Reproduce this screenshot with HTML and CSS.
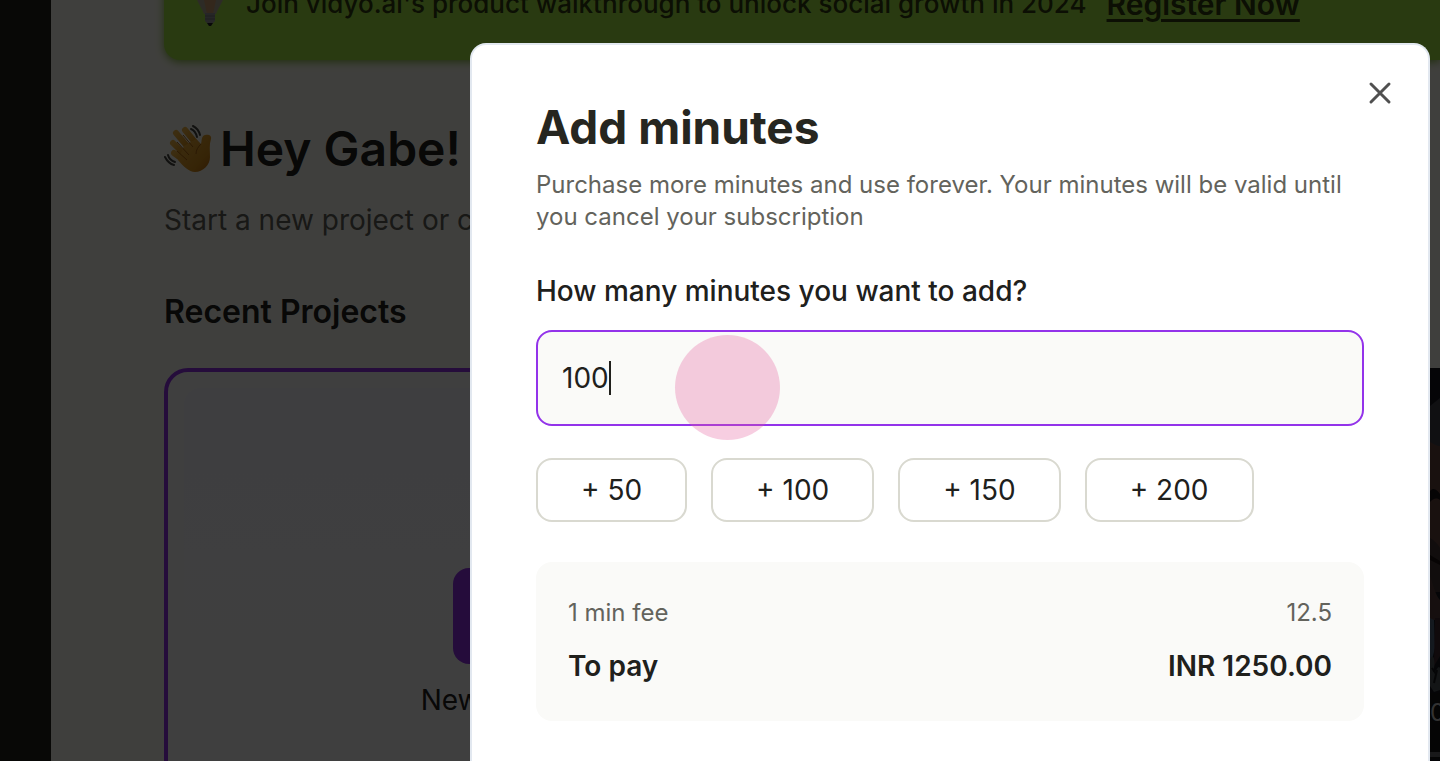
FILE: index.html
```
<!DOCTYPE html>
<html lang="en">
<head>
    <meta charset="UTF-8">
    <meta name="viewport" content="width=device-width, initial-scale=1.0">
    <title>Add minutes</title>
    <link rel="stylesheet" href="styles.css">
</head>
<body>
    <div class="page">
        <aside class="sidebar"></aside>
        <main class="content">
            <div class="banner">
                <svg class="bulb" viewBox="0 0 32 48" aria-hidden="true">
                    <path d="M16 2C7 2 2 8 2 15c0 6 5 11 8 19h12c3-8 8-13 8-19C30 8 25 2 16 2z" fill="#b5ad96"/>
                    <path d="M13 34l-3-14h12l-3 14z" fill="#c99c70"/>
                    <path d="M11 33h10v8l-3 3h-4l-3-3z" fill="#98989c"/>
                    <path d="M11 36h10M11 39h10" stroke="#77777c" stroke-width="1"/>
                    <path d="M13 43h6l-2 3h-2z" fill="#222"/>
                </svg>
                <span>Join vidyo.ai's product walkthrough to unlock social growth in 2024</span>
                <a href="#">Register Now</a>
            </div>
            <h1>
                <svg class="wave" viewBox="0 0 48 48" role="img" aria-label="Waving hand">
                    <defs>
                        <linearGradient id="skin" x1="0" y1="0" x2="1" y2="1">
                            <stop offset="0" stop-color="#f0b444"/>
                            <stop offset="0.7" stop-color="#d6901c"/>
                            <stop offset="1" stop-color="#b8640c"/>
                        </linearGradient>
                    </defs>
                    <g fill="none" stroke="url(#skin)" stroke-width="6" stroke-linecap="round">
                        <path d="M21 5L34 21"/>
                        <path d="M12 8L28 27"/>
                        <path d="M9 18L24 33"/>
                        <path d="M10 28L25 39"/>
                    </g>
                    <path d="M20 21L32 14l5 5c1-3 0-8 4-9 3-1 7 0 6 4-2 6-1 12-1 18 0 8-7 15-15 15-6 0-12-6-17-12z" fill="url(#skin)"/>
                    <path d="M19 10l10 12M13 17l12 13M13 26l10 9M37 19c-3 3-5 6-5 10" fill="none" stroke="#a86310" stroke-width="1"/>
                    <g fill="none" stroke="#454540" stroke-width="2" stroke-linecap="round">
                        <path d="M27 4c3 1 5 4 6 8"/>
                        <path d="M29 1c4 2 6 5 7 9"/>
                        <path d="M4 30c1 4 4 6 7 7"/>
                        <path d="M1 32c2 4 5 7 9 8"/>
                    </g>
                </svg>
                Hey Gabe!
            </h1>
            <p class="intro">Start a new project or continue</p>
            <h2>Recent Projects</h2>
            <div class="projects">
                <a class="new-project" href="#">
                    <span class="new-project-inner">
                        <span class="plus">
                            <svg viewBox="0 0 48 48" aria-hidden="true"><path d="M24 8v32M8 24h32" stroke="#fff" stroke-width="4"/></svg>
                        </span>
                        <span>New Project</span>
                    </span>
                </a>
                <div class="video-card">
                    <!-- edge of the video thumbnail -->
                    <svg class="thumb" viewBox="0 0 10 391" preserveAspectRatio="none" aria-hidden="true">
                        <rect width="10" height="391" fill="#15171f"/>
                        <path d="M0 38L10 30v50L0 76z" fill="#40404a"/>
                        <path d="M0 74c4 2 7 4 10 4v130H0z" fill="#65433f"/>
                        <path d="M0 123c4-4 7-1 10 3v6c-4-3-7-1-10 2z" fill="#151114"/>
                        <path d="M0 170c4 2 7 5 10 10v44H0z" fill="#443735"/>
                        <path d="M0 187l10 6v4l-10-5z" fill="#1c1112"/>
                        <path d="M0 208c4 12 6 20 10 24v20H0z" fill="#593f3c"/>
                        <path d="M0 250l4 2 1 28-5 20z" fill="#52637c"/>
                        <path d="M5 250h5v38l-6 10z" fill="#422a31"/>
                        <path d="M0 292c4-10 6 4 3 12 4 0 5-8 7-4v22l-6 2-4-6z" fill="#4c5357"/>
                        <path d="M2 300l4 6-2 9M7 302l-2 9" fill="none" stroke="#171b1d" stroke-width="2"/>
                        <path d="M0 325h10v66H0z" fill="#151515"/>
                        <path d="M0 384h10v5H0z" fill="#656568"/>
                    </svg>
                    <span class="duration">0:45</span>
                </div>
            </div>
        </main>
    </div>

    <div class="overlay">
        <form class="modal" role="dialog" aria-labelledby="modal-title">
            <button type="button" class="close" aria-label="Close">
                <svg viewBox="0 0 24 24" aria-hidden="true"><path d="M3 3l18 18M21 3L3 21"/></svg>
            </button>
            <h2 class="modal-title" id="modal-title">Add minutes</h2>
            <p class="modal-text">Purchase more minutes and use forever. Your minutes will be valid until you cancel your subscription</p>
            <label for="minutes">How many minutes you want to add?</label>
            <div class="field">
                <input type="text" id="minutes" inputmode="numeric" value="100">
                <span class="caret"></span>
                <span class="pointer"></span>
            </div>
            <div class="presets">
                <button type="button">+ 50</button>
                <button type="button">+ 100</button>
                <button type="button">+ 150</button>
                <button type="button">+ 200</button>
            </div>
            <dl class="summary">
                <div class="fee">
                    <dt>1 min fee</dt>
                    <dd>12.5</dd>
                </div>
                <div class="total">
                    <dt>To pay</dt>
                    <dd>INR 1250.00</dd>
                </div>
            </dl>
        </form>
    </div>
</body>
</html>
```
FILE: styles.css
```
* {
    box-sizing: border-box;
}
body {
    margin: 0;
    font-family: Inter, "Liberation Sans", sans-serif;
    font-size: 28px;
    line-height: 40px;
    color: #20201c;
    background-color: #fcfcf2;
    overflow: hidden;
}
h1, h2, p, dl, dd {
    margin: 0;
}
.page {
    display: flex;
    height: 100vh;
    overflow: hidden;
}
.sidebar {
    flex: 0 0 51px;
    background-color: #20201a;
}
.content {
    flex: 1;
    min-width: 0;
    padding-left: 113px;
    margin-top: -54px;
}
.banner {
    display: flex;
    align-items: center;
    gap: 20px;
    padding: 38px 30px 36px;
    border-radius: 0 0 0 16px;
    background-color: #a3e646;
    box-shadow: 0 2px 8px #84b83c;
    color: #303c10;
    font-size: 26px;
    font-weight: 500;
    white-space: nowrap;
}
.banner a {
    color: inherit;
    font-size: 30px;
    font-weight: 600;
    text-underline-offset: 4px;
}
.bulb {
    width: 32px;
    height: 48px;
    margin: -4px 0;
}
h1 {
    display: flex;
    align-items: center;
    gap: 8px;
    margin-top: 61px;
    font-size: 48px;
    line-height: 56px;
    font-weight: 600;
    white-space: nowrap;
}
.wave {
    width: 48px;
    height: 48px;
}
.intro {
    margin-top: 23px;
    color: #60605a;
}
.content h2 {
    margin-top: 52px;
    font-size: 32px;
    font-weight: 600;
}
.projects {
    display: grid;
    grid-template-columns: 674px 1fr;
    gap: 40px;
    height: 560px;
    margin-top: 36px;
}
.new-project {
    padding: 16px;
    border: 4px solid #9333ea;
    border-radius: 24px;
    background-color: #fcfcfa;
    color: inherit;
    text-decoration: none;
}
.new-project-inner {
    display: flex;
    flex-direction: column;
    align-items: center;
    gap: 16px;
    height: 100%;
    padding-top: 180px;
    border-radius: 16px;
    background: linear-gradient(#f7f7ff, #fcfcfa 80%);
}
.plus {
    display: flex;
    align-items: center;
    justify-content: center;
    width: 96px;
    height: 96px;
    border-radius: 16px;
    background-color: #9333ea;
}
.plus svg {
    width: 48px;
}
.video-card {
    position: relative;
    display: flex;
    justify-content: flex-end;
    align-items: flex-start;
    background-color: #15171f;
}
.thumb {
    width: 10px;
    height: 391px;
}
.duration {
    position: absolute;
    top: 325px;
    left: calc(100% - 10px);
    font-size: 24px;
    color: #c8c8c8;
}
.overlay {
    position: fixed;
    inset: 0;
    display: flex;
    padding: 43px 10px 0 470px;
    background-color: rgba(0, 0, 0, 0.75);
}
.modal {
    position: relative;
    flex: 1;
    padding: 54px 64px;
    border: 2px solid #e2e8f0;
    border-bottom: 0;
    border-radius: 16px 16px 0 0;
    background-color: #fff;
}
.close {
    position: absolute;
    top: 36px;
    right: 36px;
    width: 24px;
    height: 24px;
    padding: 0;
    border: 0;
    background: none;
    cursor: pointer;
}
.close svg {
    display: block;
    fill: none;
    stroke: #505050;
    stroke-width: 3;
    stroke-linecap: round;
}
.modal-title {
    font-size: 46px;
    line-height: 56px;
    font-weight: 700;
    color: #262620;
}
.modal-text {
    margin-top: 14px;
    font-size: 24px;
    line-height: 32px;
    color: #63635c;
}
.modal label {
    display: block;
    margin-top: 38px;
    font-weight: 500;
}
.field {
    position: relative;
    margin-top: 19px;
}
.field input {
    display: block;
    width: 100%;
    height: 96px;
    padding: 0 24px;
    border: 2px solid #9333ea;
    border-radius: 16px;
    outline: 0;
    background-color: #fafaf8;
    color: inherit;
    font: inherit;
}
.caret {
    position: absolute;
    top: 31px;
    left: 73px;
    width: 2px;
    height: 34px;
    background-color: #20201c;
}
/* click highlight */
.pointer {
    position: absolute;
    top: 5px;
    left: 139px;
    width: 105px;
    height: 105px;
    border-radius: 50%;
    background-color: rgba(229, 92, 156, 0.3);
    pointer-events: none;
}
.presets {
    display: flex;
    gap: 24px;
    margin-top: 32px;
}
.presets button {
    height: 64px;
    padding: 0 43px;
    border: 2px solid #d9d9d0;
    border-radius: 16px;
    background-color: #fff;
    color: inherit;
    font: inherit;
    white-space: nowrap;
    cursor: pointer;
}
.summary {
    margin-top: 40px;
    padding: 35px 32px;
    border-radius: 16px;
    background-color: #fafaf8;
}
.summary div {
    display: flex;
    justify-content: space-between;
}
.fee {
    font-size: 24px;
    line-height: 32px;
    color: #63635c;
}
.total {
    margin-top: 17px;
    font-weight: 600;
}
```
